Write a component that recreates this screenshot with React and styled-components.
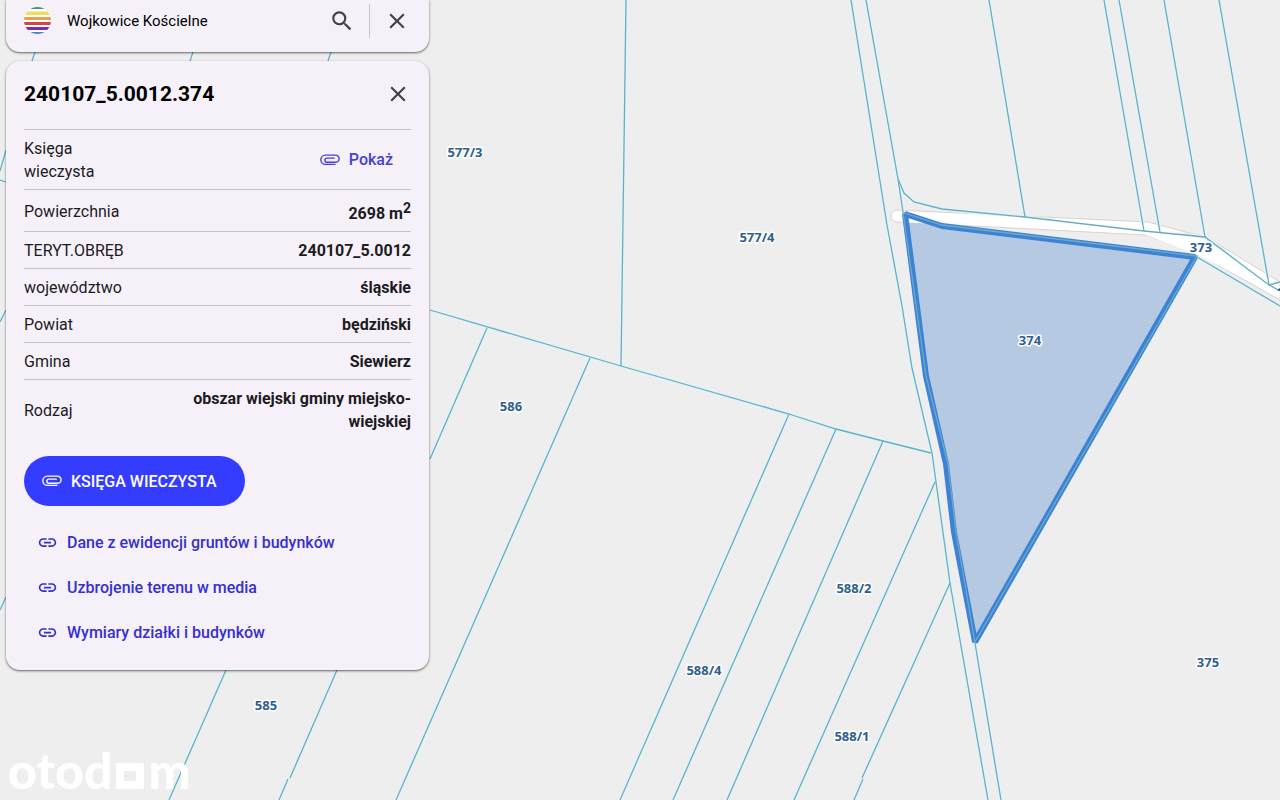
import React from "react";
import styled, { createGlobalStyle } from "styled-components";
import { MdClose, MdSearch, MdLink } from "react-icons/md";

const GlobalStyle = createGlobalStyle`
  *, *::before, *::after { box-sizing: border-box; }
  body {
    margin: 0;
    background: #eeeeee;
    color: #1c1b1f;
    font-family: Roboto, "Liberation Sans", sans-serif;
  }
`;

const Screen = styled.main`
  position: relative;
  min-height: 100vh;
  overflow: hidden;
`;

const MapCanvas = styled.svg`
  position: absolute;
  inset: 0;
  width: 100%;
  height: 100%;
  background: #eeeeee;
`;

const Halo = styled.g`
  fill: none;
  stroke: #e4f3f5;
  stroke-width: 4;
`;

const Boundary = styled.g`
  fill: none;
  stroke: #69adc2;
  stroke-width: 1.3;
`;

const ParcelLabel = styled.text`
  font: 700 13px "Noto Sans", "Open Sans", sans-serif;
  fill: #2f5f8f;
  stroke: #ffffff;
  stroke-width: 3;
  stroke-linejoin: round;
  paint-order: stroke;
  text-anchor: middle;
`;

const Sidebar = styled.aside`
  position: relative;
  display: flex;
  flex-direction: column;
  gap: 9px;
  width: 423px;
  max-width: calc(100% - 12px);
  margin-left: 6px;
`;

const Card = styled.section`
  background: #f6f1f8;
  border-radius: 14px;
  box-shadow: 0 1px 2px rgba(0, 0, 0, 0.5), 0 1px 3px 1px rgba(0, 0, 0, 0.08);
`;

const SearchCard = styled(Card)`
  display: flex;
  align-items: center;
  height: 52px;
  padding: 0 19px 11px 18px;
  border-radius: 0 0 14px 14px;
`;

const SearchInput = styled.input`
  flex: 1;
  min-width: 0;
  margin-left: 16px;
  padding: 0;
  border: 0;
  outline: 0;
  background: transparent;
  color: #000;
  font: 15px Roboto, sans-serif;
`;

const IconButton = styled.button`
  display: grid;
  place-items: center;
  width: 26px;
  height: 26px;
  padding: 0;
  border: 0;
  background: transparent;
  color: #444048;
  font-size: 26px;
  cursor: pointer;
`;

const Separator = styled.span`
  width: 1px;
  height: 34px;
  margin: 0 14px;
  background: #c9c4cc;
`;

const DetailsCard = styled(Card)`
  padding: 15px 18px;
`;

const Header = styled.header`
  display: flex;
  align-items: center;
  justify-content: space-between;
  height: 36px;
  margin-bottom: 17px;
`;

const Title = styled.h1`
  margin: 0;
  color: #000;
  font-size: 21px;
  line-height: 28px;
  font-weight: 700;
`;

const Table = styled.table`
  width: 100%;
  border-collapse: collapse;
  font-size: 16px;
  line-height: 23px;

  tr { border-top: 1px solid #c6c2c9; }
  th, td { padding: 7px 0 6px; vertical-align: middle; }
  th { width: 110px; font-weight: 400; text-align: left; }
  td { font-weight: 700; text-align: right; }
  sup { font-size: 14px; }
`;

const TextButton = styled.button`
  display: inline-flex;
  align-items: center;
  gap: 9px;
  margin-right: 18px;
  padding: 0;
  border: 0;
  background: transparent;
  color: #4440dc;
  font: 500 16px/23px Roboto, sans-serif;
  cursor: pointer;
`;

const PrimaryButton = styled(TextButton)`
  height: 50px;
  margin: 17px 0 14px;
  padding: 0 28px 0 18px;
  border-radius: 25px;
  background: #343cff;
  color: #fff;
`;

const Links = styled.nav`
  display: flex;
  flex-direction: column;
`;

const DocLink = styled.a`
  display: flex;
  align-items: center;
  gap: 9px;
  height: 45px;
  padding-left: 13px;
  color: #3530cf;
  font-size: 16px;
  font-weight: 500;
  text-decoration: none;

  svg { font-size: 21px; }
`;

const Watermark = styled.div`
  position: absolute;
  left: 8px;
  bottom: 0;
  display: flex;
  align-items: baseline;
  gap: 4px;
  color: #fff;
  font: 900 50px/60px Lato, sans-serif;
`;

const SquareLetter = styled.span`
  width: 28px;
  height: 26px;
  border: 8px solid #fff;
  border-radius: 2px;
`;

const boundaries = [
  "M626 0 L621 366",
  "M430 310 L621 366 L789 414 L836 429 L883 441 L931 453",
  "M487 328 L430 459",
  "M590 358 L396 800",
  "M789 414 L620 800",
  "M836 429 L673 800",
  "M883 441 L727 800",
  "M935 482 L794 800",
  "M950 583 L862 778 M863 779 L854 800",
  "M226 670 L169 800",
  "M337 670 L290 778 M288 779 L279 800",
  "M851 0 L887 225 L902 306 L912 368 L932 453 L936 482 L950 583 L988 800",
  "M866 0 L898 179 L903 212 L926 376 L948 464 L956 532 L975 643 L1001 800",
  "M898 179 L904 193 L914 202 L942 209 L1025 217 L1144 231 L1205 237 L1269 285 L1280 291",
  "M989 0 L1025 217",
  "M1104 0 L1144 231",
  "M1119 0 L1160 232",
  "M1164 0 L1205 237",
  "M1219 0 L1269 285 L1280 282",
  "M1197 257 L1280 306",
  "M904 213 L942 225 L1197 256 L975 642",
  "M35 52 L32 61 M193 52 L190 61 M331 52 L328 61",
  "M6 150 L0 171 M0 180 L6 182 M6 310 L0 322 M6 597 L0 610",
];

const labels = [
  ["577/3", 465, 157],
  ["577/4", 757, 242],
  ["586", 511, 411],
  ["585", 266, 710],
  ["588/4", 704, 675],
  ["588/2", 854, 593],
  ["588/1", 852, 741],
  ["375", 1208, 667],
  ["374", 1030, 345],
  ["373", 1201, 252],
];

const facts = [
  ["Powierzchnia", <>2698 m<sup>2</sup></>],
  ["TERYT.OBRĘB", "240107_5.0012"],
  ["województwo", "śląskie"],
  ["Powiat", "będziński"],
  ["Gmina", "Siewierz"],
  ["Rodzaj", "obszar wiejski gminy miejsko-wiejskiej"],
];

const documents = [
  "Dane z ewidencji gruntów i budynków",
  "Uzbrojenie terenu w media",
  "Wymiary działki i budynków",
];

function ClipIcon() {
  return (
    <svg width="20" height="12" viewBox="0 0 20 12" fill="none" stroke="currentColor" strokeWidth="1.4" aria-hidden="true">
      <path d="M15.5 10.4H5.5a4.65 4.65 0 0 1 0-9.3H15.5a3.6 3.6 0 0 1 0 7.2H7a2.1 2.1 0 0 1 0-4.2H14.8" />
    </svg>
  );
}

function RainbowLogo() {
  const stripes = [
    ["#3f9b5c", 0, 2],
    ["#f0da60", 4.5, 3.5],
    ["#e9a04c", 10, 3],
    ["#d64545", 15, 3],
    ["#7b2aa8", 20, 3],
    ["#4f82d2", 25, 2],
  ];
  return (
    <svg width="27" height="27" viewBox="0 0 27 27" role="img" aria-label="Logo">
      <clipPath id="disc"><circle cx="13.5" cy="13.5" r="13.5" /></clipPath>
      <g clipPath="url(#disc)">
        <rect width="27" height="27" fill="#fff" />
        {stripes.map(([color, y, h]) => (
          <rect key={color} y={y} width="27" height={h} fill={color} />
        ))}
      </g>
    </svg>
  );
}

function ParcelMap() {
  return (
    <MapCanvas viewBox="0 0 1280 800" preserveAspectRatio="xMinYMin slice">
      <path
        d="M897 210 L1148 222 L1208 238 L1280 282 V300 L1200 255 L1146 235 L897 222 A6 6 0 0 1 897 210"
        fill="#fff"
        stroke="#dccfcd"
      />
      <Halo>{boundaries.map((d) => <path key={d} d={d} />)}</Halo>
      <path d="M898 211 L1144 224 L1205 240 L1280 286 V297 L1200 256 L1144 234 L898 221 A5 5 0 0 1 898 211" fill="#fff" />
      <path d="M906 215 L942 226 L1194 257 L975 642 L954 532 L946 464 L926 376 Z" fill="#b5cae2" />
      <path d="M908 218 L930 223 L909 222 Z" fill="#fff" stroke="#fff" />
      <path
        d="M905 214 L942 226 L1195 257 L975 642 L954 532 L946 464 L926 376 Z"
        fill="none"
        stroke="#3d82d6"
        strokeWidth="6"
        strokeLinejoin="bevel"
      />
      <Boundary>{boundaries.map((d) => <path key={d} d={d} />)}</Boundary>
      {labels.map(([name, x, y]) => (
        <ParcelLabel key={name} x={x} y={y}>{name}</ParcelLabel>
      ))}
      <path d="M1277 290 l3 -2 v3 Z" fill="#3c5570" />
    </MapCanvas>
  );
}

export default function App() {
  return (
    <Screen>
      <GlobalStyle />
      <ParcelMap />
      <Sidebar>
        <SearchCard as="form" onSubmit={(e) => e.preventDefault()}>
          <RainbowLogo />
          <SearchInput aria-label="Szukaj" defaultValue="Wojkowice Kościelne" />
          <IconButton aria-label="Szukaj" type="submit"><MdSearch /></IconButton>
          <Separator />
          <IconButton aria-label="Wyczyść" type="button"><MdClose /></IconButton>
        </SearchCard>
        <DetailsCard>
          <Header>
            <Title>240107_5.0012.374</Title>
            <IconButton aria-label="Zamknij" type="button"><MdClose /></IconButton>
          </Header>
          <Table>
            <tbody>
              <tr>
                <th scope="row">Księga wieczysta</th>
                <td><TextButton type="button"><ClipIcon />Pokaż</TextButton></td>
              </tr>
              {facts.map(([name, value]) => (
                <tr key={name}>
                  <th scope="row">{name}</th>
                  <td>{value}</td>
                </tr>
              ))}
            </tbody>
          </Table>
          <PrimaryButton type="button"><ClipIcon />KSIĘGA WIECZYSTA</PrimaryButton>
          <Links>
            {documents.map((name) => (
              <DocLink key={name} href="#"><MdLink />{name}</DocLink>
            ))}
          </Links>
        </DetailsCard>
      </Sidebar>
      <Watermark role="img" aria-label="otodom">
        <span>otod</span><SquareLetter /><span>m</span>
      </Watermark>
    </Screen>
  );
}
